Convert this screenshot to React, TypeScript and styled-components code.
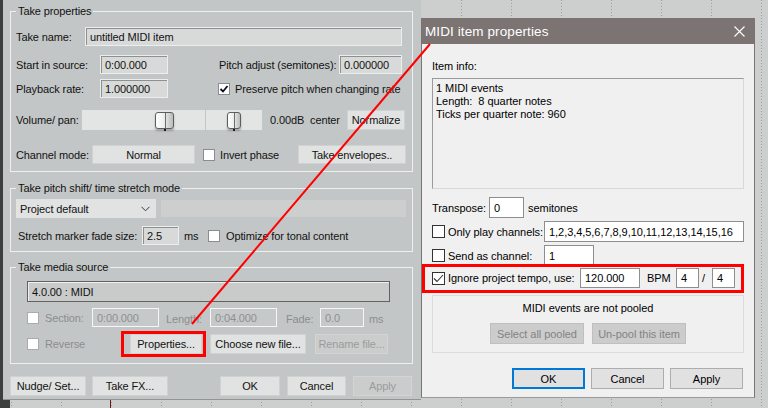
import React from "react";
import styled, { createGlobalStyle } from "styled-components";

const Global = createGlobalStyle`
  html, body { margin: 0; padding: 0; }
  body {
    width: 768px; height: 408px; overflow: hidden;
    font-family: "Liberation Sans", Arial, sans-serif;
  }
  #root { width: 768px; height: 408px; }
`;

const Desktop = styled.div`
  position: relative;
  width: 768px;
  height: 408px;
  overflow: hidden;
  background: #cdcece;
`;

const ArrangeGrid = styled.svg`
  position: absolute;
  inset: 0;
`;

/* ---------- Left (REAPER themed) window ---------- */

const TakeWindow = styled.div`
  position: absolute;
  left: 3px;
  top: 0;
  width: 418px;
  height: 399px;
  box-sizing: border-box;
  padding: 0 0 0 7px;
  background: #c3c6c6;
  display: flex;
  flex-direction: column;
  font-size: 11px;
  letter-spacing: -0.12px;
  color: #121212;
  box-shadow: 0 1px 0 #939595;
`;

const Group = styled.fieldset<{ $mt: number; $pt: number; $pb: number }>`
  margin: ${(p) => p.$mt}px 0 0 0;
  width: 403px;
  min-width: 0;
  box-sizing: border-box;
  border: 1px solid #eef0f0;
  padding: ${(p) => p.$pt}px 0 ${(p) => p.$pb}px 5px;
  display: flex;
  flex-direction: column;
`;

const Legend = styled.legend`
  padding: 0 2px;
  margin: 0;
  font-size: 11px;
  line-height: 13px;
  height: 13px;
`;

const Row = styled.div<{ $mt?: number; $h: number; $ml?: number }>`
  display: flex;
  align-items: center;
  height: ${(p) => p.$h}px;
  margin-top: ${(p) => p.$mt ?? 0}px;
  margin-left: ${(p) => p.$ml ?? 0}px;
  flex: none;
`;

const Label = styled.span<{ $w?: number; $ml?: number; $dim?: boolean; $dy?: number }>`
  flex: none;
  width: ${(p) => (p.$w ? `${p.$w}px` : "auto")};
  margin-left: ${(p) => p.$ml ?? 0}px;
  padding-top: ${(p) => p.$dy ?? 0}px;
  white-space: nowrap;
  color: ${(p) => (p.$dim ? "#8b8e8e" : "inherit")};
`;

const Field = styled.div<{ $w: number; $h?: number; $dis?: boolean }>`
  flex: none;
  width: ${(p) => p.$w}px;
  height: ${(p) => p.$h ?? 19}px;
  box-sizing: border-box;
  display: flex;
  align-items: center;
  padding-left: 4px;
  background: ${(p) => (p.$dis ? "#c6c9c9" : "#d8d9d9")};
  border: 1px solid ${(p) => (p.$dis ? "#f6f6f6" : "#eceded")};
  box-shadow: ${(p) => (p.$dis ? "none" : "inset 1px 1px 0 #8d9090")};
  color: ${(p) => (p.$dis ? "#8d9090" : "#121212")};
`;

const SourceField = styled.div<{ $w: number }>`
  flex: none;
  width: ${(p) => p.$w}px;
  height: 21px;
  box-sizing: border-box;
  display: flex;
  align-items: center;
  padding-left: 4px;
  background: #c9cbcb;
  border: 1px solid #616363;
  box-shadow: inset 1px 1px 0 #eef0f0;
`;

const FlatField = styled.div<{ $w: number; $ml?: number }>`
  flex: none;
  width: ${(p) => p.$w}px;
  height: 17px;
  margin-left: ${(p) => p.$ml ?? 0}px;
  background: #cdcfcf;
`;

const Btn = styled.div<{ $w: number; $ml?: number; $dis?: boolean; $h?: number }>`
  flex: none;
  width: ${(p) => p.$w}px;
  height: ${(p) => p.$h ?? 19}px;
  margin-left: ${(p) => p.$ml ?? 0}px;
  box-sizing: border-box;
  display: flex;
  align-items: center;
  justify-content: center;
  background: ${(p) => (p.$dis ? "#cbcdcd" : "#e1e2e2")};
  border: 1px solid ${(p) => (p.$dis ? "#d3d5d5" : "#d0d2d2")};
  color: ${(p) => (p.$dis ? "#999c9c" : "#121212")};
  white-space: nowrap;
`;

const Select = styled.div<{ $w: number }>`
  flex: none;
  width: ${(p) => p.$w}px;
  height: 19px;
  box-sizing: border-box;
  display: flex;
  align-items: center;
  justify-content: space-between;
  padding: 0 6px 0 4px;
  background: #e1e2e2;
`;

const ClassicCheck = styled.span<{ $ml?: number; $dis?: boolean }>`
  flex: none;
  width: 12px;
  height: 12px;
  box-sizing: border-box;
  margin-left: ${(p) => p.$ml ?? 0}px;
  background: #fff;
  border: 1px solid ${(p) => (p.$dis ? "#a9acac" : "#8a8d8d")};
  display: flex;
  align-items: center;
  justify-content: center;
`;

const Track = styled.div<{ $w: number; $ml?: number }>`
  position: relative;
  flex: none;
  width: ${(p) => p.$w}px;
  height: 20px;
  margin-left: ${(p) => p.$ml ?? 0}px;
  background: #e3e4e4;
`;

const Thumb = styled.span<{ $w: number }>`
  position: absolute;
  top: 2px;
  width: ${(p) => p.$w}px;
  height: 17px;
  box-sizing: border-box;
  border: 1px solid #5c5e5e;
  border-radius: 3px;
  background: linear-gradient(to right, #ffffff 0%, #eeeeee 45%, #b9bbbb 100%);
  box-shadow: 0 2px 2px rgba(60, 60, 60, 0.35);
  &::before {
    content: "";
    position: absolute;
    left: 50%;
    top: 0;
    bottom: 0;
    width: 1px;
    background: #6b6d6d;
  }
  &::after {
    content: "";
    position: absolute;
    left: 50%;
    bottom: -3px;
    width: 2px;
    height: 2px;
    margin-left: -1px;
    background: #1a1a1a;
  }
`;

const BottomBar = styled.div`
  display: flex;
  align-items: center;
  height: 20px;
  margin-top: 12px;
`;

/* ---------- Right (Windows 10) dialog ---------- */

const MidiWindow = styled.div`
  position: absolute;
  left: 421px;
  top: 18px;
  width: 334px;
  height: 380px;
  box-sizing: border-box;
  background: #f0f0f0;
  border: 1px solid #7b7472;
  border-bottom-color: #9a9a9a;
  display: flex;
  flex-direction: column;
  font-size: 11px;
  letter-spacing: -0.05px;
  color: #000;
`;

const TitleBar = styled.div`
  flex: none;
  height: 25px;
  display: flex;
  align-items: center;
  justify-content: space-between;
  padding: 0 9px 0 3px;
  background: #7b7472;
  color: #ffffff;
  font-size: 13.5px;
  letter-spacing: 0.1px;
`;

const Body = styled.div`
  display: flex;
  flex-direction: column;
  padding: 0 10px;
`;

const Caption = styled.div<{ $mt: number }>`
  margin-top: ${(p) => p.$mt}px;
  line-height: 13px;
`;

const InfoBox = styled.div`
  margin-top: 5px;
  height: 111px;
  box-sizing: border-box;
  border: 1px solid #9a9a9a;
  border-right-color: #d8d8d8;
  border-bottom-color: #d8d8d8;
  padding: 3px;
  line-height: 13px;
  background: #f0f0f0;
`;

const WinInput = styled.div<{ $w: number; $h?: number }>`
  flex: none;
  width: ${(p) => p.$w}px;
  height: ${(p) => p.$h ?? 21}px;
  box-sizing: border-box;
  display: flex;
  align-items: center;
  padding-left: 4px;
  background: #ffffff;
  border: 1px solid #8e8e8e;
`;

const WinCheck = styled.span`
  flex: none;
  width: 13px;
  height: 13px;
  box-sizing: border-box;
  background: #fff;
  border: 1px solid #333;
  display: flex;
  align-items: center;
  justify-content: center;
`;

const PoolBox = styled.div`
  margin-top: 7px;
  height: 58px;
  box-sizing: border-box;
  border: 1px solid #dcdcdc;
  display: flex;
  flex-direction: column;
  align-items: center;
`;

const WinBtnRow = styled.div<{ $mt: number; $end?: boolean }>`
  display: flex;
  align-items: center;
  justify-content: ${(p) => (p.$end ? "flex-end" : "center")};
  gap: ${(p) => (p.$end ? 6 : 8)}px;
  margin-top: ${(p) => p.$mt}px;
  padding-right: ${(p) => (p.$end ? 1 : 0)}px;
`;

const WinBtn = styled.div<{ $w: number; $dis?: boolean; $def?: boolean }>`
  flex: none;
  width: ${(p) => p.$w}px;
  height: 21px;
  box-sizing: border-box;
  display: flex;
  align-items: center;
  justify-content: center;
  background: ${(p) => (p.$dis ? "#cccccc" : "#e1e1e1")};
  border: ${(p) => (p.$def ? "2px solid #0078d7" : `1px solid ${p.$dis ? "#bfbfbf" : "#adadad"}`)};
  color: ${(p) => (p.$dis ? "#838383" : "#000")};
  white-space: nowrap;
`;

/* ---------- Annotations ---------- */

const Highlight = styled.div<{ $x: number; $y: number; $w: number; $h: number }>`
  position: absolute;
  left: ${(p) => p.$x}px;
  top: ${(p) => p.$y}px;
  width: ${(p) => p.$w}px;
  height: ${(p) => p.$h}px;
  box-sizing: border-box;
  border: 3px solid #ff0000;
  pointer-events: none;
`;

const Pointer = styled.svg`
  position: absolute;
  inset: 0;
  pointer-events: none;
`;

const ClassicTick = () => (
  <svg width="10" height="10" viewBox="0 0 10 10">
    <path d="M1.5 5 L4 7.5 L8.5 2" fill="none" stroke="#0c0c28" strokeWidth="1.8" />
  </svg>
);

const WinTick = () => (
  <svg width="11" height="11" viewBox="0 0 11 11">
    <path d="M1 5.5 L4 8.5 L10 2" fill="none" stroke="#333" strokeWidth="1.1" />
  </svg>
);

const Chevron = () => (
  <svg width="9" height="6" viewBox="0 0 9 6">
    <path d="M0.5 0.8 L4.5 4.8 L8.5 0.8" fill="none" stroke="#3a3a3a" strokeWidth="1" />
  </svg>
);

const CloseX = () => (
  <svg width="11" height="11" viewBox="0 0 11 11">
    <path d="M0.5 0.5 L10.5 10.5 M10.5 0.5 L0.5 10.5" stroke="#ffffff" strokeWidth="1.1" />
  </svg>
);

const Slider = ({ w, ml, thumb, value }: { w: number; ml?: number; thumb: number; value: number }) => (
  <Track $w={w} $ml={ml}>
    <Thumb $w={thumb} style={{ left: Math.round((w - thumb) * value) }} />
  </Track>
);

const gridLines = Array.from({ length: 16 }, (_, i) => 11 + i * 50);

export default function App() {
  return (
    <>
      <Global />
      <Desktop>
        <ArrangeGrid width="768" height="408">
          {gridLines.map((x) => (
            <line key={x} x1={x + 0.5} y1="0" x2={x + 0.5} y2="408" stroke="#9d9e9e" strokeDasharray="1 2" />
          ))}
          <rect x="0" y="0" width="10" height="408" fill="#3d3e3e" />
          <line x1="110.5" y1="399" x2="110.5" y2="408" stroke="#6b1a1a" strokeWidth="1" />
        </ArrangeGrid>

        <TakeWindow>
          <Group $mt={5} $pt={9} $pb={7}>
            <Legend>Take properties</Legend>
            <Row $h={19}>
              <Label $w={69}>Take name:</Label>
              <Field $w={317}>untitled MIDI item</Field>
            </Row>
            <Row $h={19} $mt={9}>
              <Label $w={84}>Start in source:</Label>
              <Field $w={68}>0:00.000</Field>
              <Label $ml={51} $w={120}>Pitch adjust (semitones):</Label>
              <Field $w={63}>0.000000</Field>
            </Row>
            <Row $h={19} $mt={5}>
              <Label $w={84}>Playback rate:</Label>
              <Field $w={68}>1.000000</Field>
              <ClassicCheck $ml={50}>
                <ClassicTick />
              </ClassicCheck>
              <Label $ml={5}>Preserve pitch when changing rate</Label>
            </Row>
            <Row $h={20} $mt={12}>
              <Label $w={66}>Volume/ pan:</Label>
              <Slider w={123} thumb={19} value={0.7} />
              <Slider w={56} ml={1} thumb={14} value={0.5} />
              <Label $ml={8} $w={77}>0.00dB&nbsp;&nbsp;center</Label>
              <Btn $w={58} $h={20}>Normalize</Btn>
            </Row>
            <Row $h={19} $mt={15}>
              <Label $w={76}>Channel mode:</Label>
              <Btn $w={103}>Normal</Btn>
              <ClassicCheck $ml={8} />
              <Label $ml={5} $w={78}>Invert phase</Label>
              <Btn $w={108}>Take envelopes..</Btn>
            </Row>
          </Group>

          <Group $mt={10} $pt={4} $pb={6}>
            <Legend>Take pitch shift/ time stretch mode</Legend>
            <Row $h={19}>
              <Select $w={140}>
                <span>Project default</span>
                <Chevron />
              </Select>
              <FlatField $w={245} $ml={5} />
            </Row>
            <Row $h={19} $mt={8}>
              <Label $ml={2} $w={124}>Stretch marker fade size:</Label>
              <Field $w={37}>2.5</Field>
              <Label $ml={5} $w={24}>ms</Label>
              <ClassicCheck />
              <Label $ml={6}>Optimize for tonal content</Label>
            </Row>
          </Group>

          <Group $mt={9} $pt={7} $pb={9}>
            <Legend>Take media source</Legend>
            <Row $h={21} $ml={11}>
              <SourceField $w={363}>4.0.00 : MIDI</SourceField>
            </Row>
            <Row $h={19} $mt={6} $ml={11}>
              <ClassicCheck $dis />
              <Label $ml={6} $w={47} $dim>Section:</Label>
              <Field $w={67} $dis>0:00.000</Field>
              <Label $ml={7} $w={44} $dim $dy={3}>Length:</Label>
              <Field $w={67} $dis>0:04.000</Field>
              <Label $ml={9} $w={34} $dim $dy={3}>Fade:</Label>
              <Field $w={44} $dis>0.0</Field>
              <Label $ml={5} $dim $dy={3}>ms</Label>
            </Row>
            <Row $h={20} $mt={7} $ml={11}>
              <ClassicCheck $dis />
              <Label $ml={6} $w={85} $dim>Reverse</Label>
              <Btn $w={72} $h={20}>Properties...</Btn>
              <Btn $w={96} $h={20} $ml={8}>Choose new file...</Btn>
              <Btn $w={73} $h={20} $ml={9} $dis>Rename file...</Btn>
            </Row>
          </Group>

          <BottomBar>
            <Btn $w={76} $h={20}>Nudge/ Set...</Btn>
            <Btn $w={76} $h={20} $ml={6}>Take FX...</Btn>
            <Btn $w={60} $h={20} $ml={52}>OK</Btn>
            <Btn $w={59} $h={20} $ml={7}>Cancel</Btn>
            <Btn $w={59} $h={20} $ml={7} $dis>Apply</Btn>
          </BottomBar>
        </TakeWindow>

        <MidiWindow>
          <TitleBar>
            <span>MIDI item properties</span>
            <CloseX />
          </TitleBar>
          <Body>
            <Caption $mt={16}>Item info:</Caption>
            <InfoBox>
              <div>1 MIDI events</div>
              <div>Length:&nbsp; 8 quarter notes</div>
              <div>Ticks per quarter note: 960</div>
            </InfoBox>
            <Row $h={21} $mt={8}>
              <Label $w={57}>Transpose:</Label>
              <WinInput $w={35}>0</WinInput>
              <Label $ml={4}>semitones</Label>
            </Row>
            <Row $h={21} $mt={3}>
              <WinCheck />
              <Label $ml={3} $w={96}>Only play channels:</Label>
              <WinInput $w={200}>1,2,3,4,5,6,7,8,9,10,11,12,13,14,15,16</WinInput>
            </Row>
            <Row $h={21} $mt={3}>
              <WinCheck />
              <Label $ml={3} $w={96}>Send as channel:</Label>
              <WinInput $w={50}>1</WinInput>
            </Row>
            <Row $h={20} $mt={2}>
              <WinCheck>
                <WinTick />
              </WinCheck>
              <Label $ml={3} $w={132}>Ignore project tempo, use:</Label>
              <WinInput $w={60} $h={20}>120.000</WinInput>
              <Label $ml={7} $w={29}>BPM</Label>
              <WinInput $w={23} $h={20}>4</WinInput>
              <Label $ml={3} $w={10}>/</Label>
              <WinInput $w={23} $h={20}>4</WinInput>
            </Row>
            <PoolBox>
              <Caption $mt={6}>MIDI events are not pooled</Caption>
              <WinBtnRow $mt={8}>
                <WinBtn $w={94} $dis>Select all pooled</WinBtn>
                <WinBtn $w={94} $dis>Un-pool this item</WinBtn>
              </WinBtnRow>
            </PoolBox>
            <WinBtnRow $mt={15} $end>
              <WinBtn $w={73} $def>OK</WinBtn>
              <WinBtn $w={73}>Cancel</WinBtn>
              <WinBtn $w={73}>Apply</WinBtn>
            </WinBtnRow>
          </Body>
        </MidiWindow>

        <Highlight $x={121} $y={331} $w={85} $h={26} />
        <Highlight $x={422} $y={264} $w={322} $h={29} />
        <Pointer width="768" height="408">
          <line x1="430" y1="44" x2="192" y2="324" stroke="#ff0000" strokeWidth="2" />
        </Pointer>
      </Desktop>
    </>
  );
}
